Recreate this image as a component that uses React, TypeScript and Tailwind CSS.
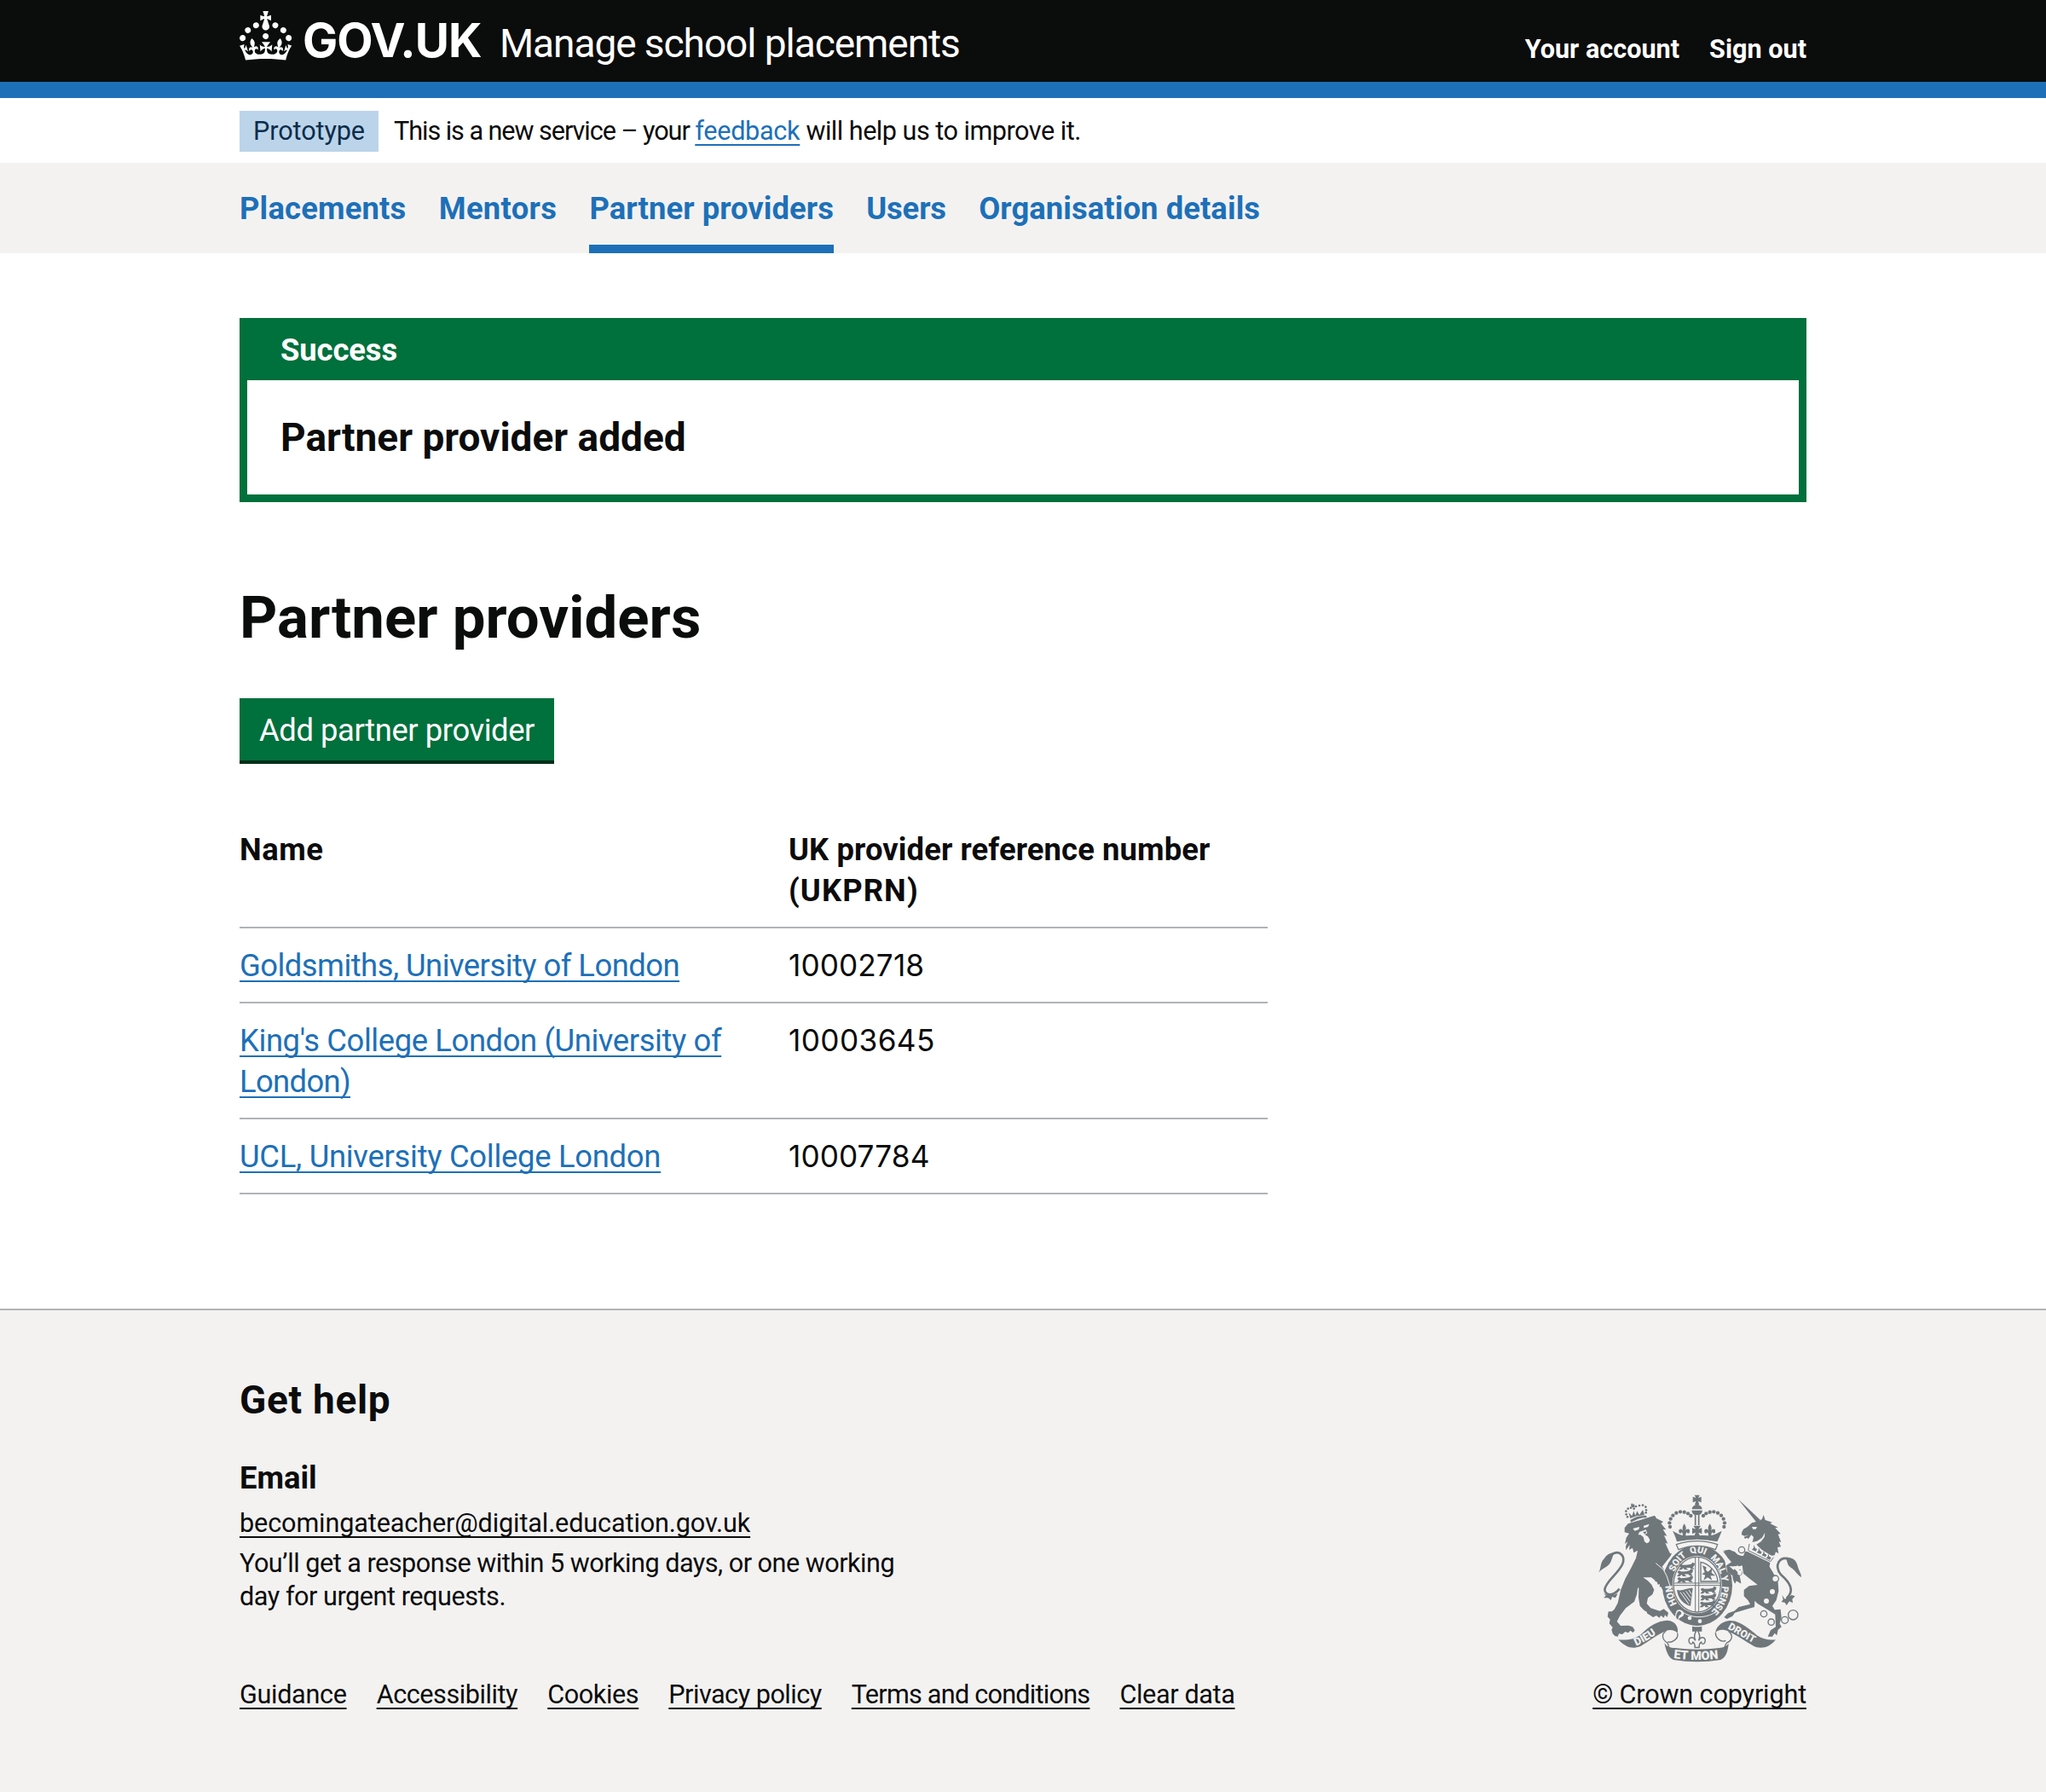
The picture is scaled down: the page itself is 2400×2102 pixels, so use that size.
import type { ReactNode } from "react";

const navItems = [
  { label: "Placements", tracking: "tracking-[0.17px]" },
  { label: "Mentors", tracking: "tracking-[0.3px]" },
  { label: "Partner providers", tracking: "tracking-[0.06px]", current: true },
  { label: "Users", tracking: "tracking-[-0.14px]" },
  { label: "Organisation details", tracking: "tracking-[0.08px]" },
];

const footerLinks = [
  { label: "Guidance", tracking: "tracking-[-0.33px]" },
  { label: "Accessibility", tracking: "tracking-[-0.44px]" },
  { label: "Cookies", tracking: "tracking-[-0.4px]" },
  { label: "Privacy policy", tracking: "tracking-[-0.5px]" },
  { label: "Terms and conditions", tracking: "tracking-[-0.75px]" },
  { label: "Clear data", tracking: "tracking-[-0.37px]" },
];

function Link({ children, className = "" }: { children: ReactNode; className?: string }) {
  return (
    <a
      href="#"
      className={`underline decoration-[2px] underline-offset-[4.5px] [text-decoration-skip-ink:none] ${className}`}
    >
      {children}
    </a>
  );
}

function Container({ children, className = "" }: { children: ReactNode; className?: string }) {
  return <div className={`mx-auto w-[1838px] ${className}`}>{children}</div>;
}

function CrownLogo() {
  return (
    <svg viewBox="0 0 32 30" className="mt-[13px] h-[57.5px] w-[61.3px] shrink-0 fill-white" aria-hidden="true">
      <path d="M22.6 10.4c-1 .4-2-.1-2.4-1-.4-.9.1-2 1-2.4.9-.4 2 .1 2.4 1s-.1 2-1 2.4m-5.9 6.7c-.9.4-2-.1-2.4-1-.4-.9.1-2 1-2.4.9-.4 2 .1 2.4 1s-.1 2-1 2.4m10.8-3.7c-1 .4-2-.1-2.4-1-.4-.9.1-2 1-2.4.9-.4 2 .1 2.4 1s0 2-1 2.4m3.3 4.8c-1 .4-2-.1-2.4-1-.4-.9.1-2 1-2.4.9-.4 2 .1 2.4 1s-.1 2-1 2.4M17 4.7l2.3 1.2V2.5l-2.3.7-.2-.2.9-3h-3.4l.9 3-.2.2c-.1.1-2.3-.7-2.3-.7v3.4L15 4.7c.1.1.1.2.2.2l-1.3 4c-.1.2-.1.4-.1.6 0 1.1.8 2 1.9 2.2h.7c1-.2 1.9-1.1 1.9-2.1 0-.2 0-.4-.1-.6l-1.3-4c-.1-.2 0-.2.1-.3m-7.6 5.7c.9.4 2-.1 2.4-1 .4-.9-.1-2-1-2.4-.9-.4-2 .1-2.4 1s0 2 1 2.4m-5 3c.9.4 2-.1 2.4-1 .4-.9-.1-2-1-2.4-.9-.4-2 .1-2.4 1s.1 2 1 2.4m-3.2 4.8c.9.4 2-.1 2.4-1 .4-.9-.1-2-1-2.4-.9-.4-2 .1-2.4 1s0 2 1 2.4m14.8 11c4.4 0 8.6.3 12.3.8 1.1-4.5 2.4-7 3.7-8.8l-2.5-.9c.2 1.3.3 1.9 0 2.7-.4-.4-.8-1.1-1.1-2.3l-1.2 4c.7-.5 1.3-.8 2-.9-1.1 2.5-2.6 3.1-3.5 3-1.1-.2-1.7-1.2-1.5-2.1.3-1.2 1.5-1.5 2.1-.1 1.1-2.3-.8-3-2-2.3 1.9-1.9 2.1-3.5.6-5.6-2.1 1.6-2.1 3.2-1.2 5.5-1.2-1.4-3.2-.6-2.5 1.6.9-1.4 2.1-.5 1.9.8-.2 1.1-1.7 2.1-3.5 1.9-2.7-.2-2.9-2.1-2.9-3.6.7-.1 1.9.5 2.9 1.9l.4-4.3c-1.1 1.1-2.1 1.4-3.2 1.4.4-1.2 2.1-3 2.1-3h-5.4s1.7 1.9 2.1 3c-1.1 0-2.1-.2-3.2-1.4l.4 4.3c1-1.4 2.2-2 2.9-1.9-.1 1.5-.2 3.4-2.9 3.6-1.9.2-3.4-.8-3.5-1.9-.2-1.3 1-2.2 1.9-.8.7-2.3-1.2-3-2.5-1.6.9-2.2.9-3.9-1.2-5.5-1.5 2-1.3 3.7.6 5.6-1.2-.7-3.1 0-2 2.3.6-1.4 1.8-1.1 2.1.1.2.9-.3 1.9-1.5 2.1-.9.2-2.4-.5-3.5-3 .6 0 1.2.3 2 .9l-1.2-4c-.3 1.1-.7 1.9-1.1 2.3-.3-.8-.2-1.4 0-2.7l-2.9.9C1.3 23 2.6 25.5 3.7 30c3.7-.5 7.9-.8 12.3-.8" />
    </svg>
  );
}

const archDots = [
  [-95, 152], [-97, 138], [-93, 124], [-85, 112], [-73, 103], [-59, 99], [-45, 100], [-32, 105], [-22, 113],
];

function FleurDeLis({ x, y, s = 1 }: { x: number; y: number; s?: number }) {
  return (
    <path
      transform={`translate(${x} ${y}) scale(${s})`}
      d="M0-17C6-9 6-2 3 4C8-6 18-2 15 7C13 12 8 11 8 7C5 8 4 11 4 17H-4C-4 11-5 8-8 7C-8 11-13 12-15 7C-18-2-8-6-3 4C-6-2-6-9 0-17Z"
    />
  );
}

function MiniLion({ x, y }: { x: number; y: number }) {
  return (
    <path
      transform={`translate(${x} ${y}) scale(1.3 1.15)`}
      d="M2 4L6 1L12 4L24 3L34 1L38-4L44-1L42 7L38 10L43 16H34L31 12L20 12L26 18H16L13 13L8 18H0L6 10L2 8Z"
    />
  );
}

function RoyalArms() {
  return (
    <svg viewBox="70 38 722 592" className="h-[197.3px] w-[240.7px] fill-[#6f777b]" aria-hidden="true">
      {/* lion */}
      <g transform="translate(60 30)">
        <path d="M108 125L120 111L165 97L214 82L220 92L244 104L236 110L254 132L243 131L257 154L247 152L260 181L251 178L262 203L268 216L274 214L270 224L240 262L252 280L273 335L270 346L262 338L262 348L252 345L244 346L243 334L230 332L235 322L225 325L222 315L214 314L220 306L214 300L222 292L200 300L173 300L190 312L203 325L212 344L206 360L190 372L186 392L200 408L232 418L246 411L262 424L258 440L250 432L246 442L236 434L230 442L220 434L208 440L196 432L188 427L186 421L176 415L162 400L157 372L158 336L154 338L151 360L142 385L112 408L92 434L81 455L94 470L122 469L136 474L144 486L138 494L128 487L121 495L110 491L100 500L88 498L84 508L74 506L66 498L62 484L66 476L54 462L57 448L48 438L51 420L63 420L72 412L84 390L94 345L110 305L130 268L148 232L154 205L140 213L136 196L124 203L126 185L113 204L112 190L119 174L109 182L114 160L124 145L108 141Z" />
        <path d="M137 128L160 122L158 131L144 136ZM175 118L195 112L190 122L176 126ZM160 140L183 132L188 143L180 150L190 156L197 168L194 176L186 180L178 174L174 158L164 150L156 150Z" className="fill-[#f3f2f1]" />
        <path d="M172 140L186 138L180 148Z" />
        <path d="M12 286C28 276 18 252 36 234C46 218 58 212 72 214C62 228 64 250 44 262C32 268 22 276 12 286Z" />
        <path d="M64 218C92 202 112 226 100 254C84 288 42 314 38 342C38 362 66 370 90 340" className="fill-none stroke-[#6f777b] stroke-[8]" />
        <path d="M28 348C40 366 62 366 84 356L76 372L64 368L60 380L50 372L34 372L42 364Z" />
        <path d="M128 98C160 80 158 86 184 82L186 89C160 90 156 94 130 106Z" />
        <path d="M128 92L122 72L134 84L140 66L146 82L152 66L160 80L172 62L178 80L184 80L150 84Z" />
        {[[114, 78], [113, 67], [120, 58], [130, 55], [148, 50], [160, 47], [172, 46], [182, 52], [184, 63], [183, 72], [118, 87], [141, 58]].map(([x, y], i) => (
          <circle key={i} cx={x} cy={y} r="4" />
        ))}
        <path d="M133 38L139 44L142 40L144 52L134 54L130 46Z" />
      </g>

      {/* unicorn */}
      <g transform="translate(420 30)">
        <path d="M147 24L226 98L213 107Z" />
        <path d="M160 142L166 130L180 122L196 108L220 102L232 94L237 80L243 98L268 106L260 110L288 124L278 126L297 146L288 148L299 176L291 174L298 192L286 194L290 216L280 210L276 222L262 224L232 204L212 184L228 174L240 158L242 142L232 160L214 172L198 176L202 158L194 150L188 158L184 164L178 160L172 164L168 158L186 150L170 154L160 150Z" />
        <path d="M196 122L214 122L210 130L200 130Z" className="fill-[#f3f2f1]" />
        <path d="M188 178L270 226L272 232L262 248L182 208Z" className="fill-[#f3f2f1]" />
        <path d="M187 182L183 205L262 244L272 229" className="fill-none stroke-[#6f777b] stroke-[3]" />
        {[[204, 196], [221, 206], [238, 216], [254, 226]].map(([x, y]) => (
          <path key={x} d={`M${x - 8} ${y + 6}L${x - 2} ${y}L${x - 1} ${y - 10}L${x + 4} ${y + 1}L${x + 10} ${y + 4}L${x + 6} ${y + 12}Z`} />
        ))}
        <path d="M180 209L260 248L258 262L270 282L288 318L290 348L282 380L268 400L276 414L297 412L300 440L294 462L300 474L288 484L284 504L276 496L268 508L252 508L262 486L280 474L278 430L252 414L216 392L206 382L205 404L176 412L136 424L128 436L108 446L98 440L112 426L134 418L150 404L190 394L182 380L168 366L168 344L186 330L216 326L188 304L166 286L162 258L140 264L116 262L128 278L146 290L158 322L142 312L136 322L126 300L116 290L104 284L108 256L132 244L156 240L140 244L126 230L114 212L104 222L98 218L94 206L116 202L136 210L150 224L166 224L172 208Z" />
        <path d="M316 234C340 226 352 240 358 262C362 278 370 286 370 299C356 292 350 276 334 266C320 258 322 246 316 234Z" />
        <path d="M332 236C290 222 274 260 298 290C330 318 348 346 318 374" className="fill-none stroke-[#6f777b] stroke-[8]" />
        <path d="M302 362L312 376L336 362L348 366L338 376L340 390L328 384L318 398L312 388L300 386L306 378Z" />
        {[[160, 203, 11], [150, 283, 10], [278, 305, 12], [238, 428, 11], [264, 457, 11], [312, 450, 12], [341, 432, 17]].map(([x, y, r]) => (
          <circle key={y} cx={x} cy={y} r={r} className="fill-none stroke-[#6f777b] stroke-[4]" />
        ))}
        <g className="fill-[#f3f2f1]">
          <circle cx="278" cy="305" r="9" />
          <circle cx="268" cy="350" r="9" />
          <circle cx="247" cy="383" r="9" />
          <circle cx="150" cy="283" r="7" />
          <circle cx="142" cy="228" r="5" />
        </g>
      </g>

      {/* garter and shield */}
      <ellipse cx="424" cy="358" rx="127" ry="146" className="fill-[#f3f2f1]" />
      <ellipse cx="424" cy="358" rx="123" ry="142" />
      <path d="M284 282L312 312L334 376L308 384L290 352L262 330L262 292Z" />
      <path d="M278 280L304 302L316 324L333 376" className="fill-none stroke-[#f3f2f1] stroke-[3]" />
      <path d="M514 236L552 248L536 254L556 268L570 292L578 350L558 330L528 310Z" className="fill-[#f3f2f1]" />
      <path d="M516 240L540 234L560 248L586 256L594 280L560 290L548 292L572 318L578 350L562 342L552 326L530 312L526 288L544 276L532 262Z" />
      <path d="M536 290L560 292L552 304ZM566 304L582 304L578 322L566 320Z" className="fill-[#f3f2f1]" />
      <ellipse cx="423" cy="355" rx="87" ry="101" className="fill-[#f3f2f1]" />
      <ellipse cx="423" cy="355" rx="83" ry="97" className="fill-none stroke-[#6f777b] stroke-[4]" />
      <path d="M417 259V451M429 259V451M341 350H505M341 358H505" className="fill-none stroke-[#6f777b] stroke-[3]" />
      <MiniLion x={358} y={282} />
      <MiniLion x={352} y={305} />
      <MiniLion x={352} y={328} />
      <MiniLion x={434} y={366} />
      <MiniLion x={434} y={390} />
      <MiniLion x={432} y={414} />
      <path d="M436 276V344H496C494 312 466 282 436 276Z" className="fill-none stroke-[#6f777b] stroke-[4]" />
      <path d="M442 288L456 294L454 304L462 310L476 296L474 314L488 324L470 324L476 340L460 330L446 340L452 322L440 318L450 312Z" />
      <path d="M352 374C372 380 392 364 408 368L400 430C376 426 356 404 352 374Z" />
      <path d="M364 382L394 424M374 382L398 414M384 378L401 402M394 374L403 388" className="fill-none stroke-[#f3f2f1] stroke-[3]" />
      <path id="garter" d="M423 473A97 116 0 0 1 423 242A97 116 0 0 1 423 473" className="fill-none" />
      <g className="fill-[#f3f2f1] stroke-[#f3f2f1] stroke-[0.8] font-['Roboto'] text-[32px] font-bold">
        <text><textPath href="#garter" startOffset="90">HON</textPath></text>
        <text><textPath href="#garter" startOffset="206">SOIT</textPath></text>
        <text><textPath href="#garter" startOffset="294">QUI</textPath></text>
        <text><textPath href="#garter" startOffset="368">MAL Y</textPath></text>
        <text><textPath href="#garter" startOffset="478">PENSE</textPath></text>
      </g>
      <path d="M352 446C366 438 380 452 376 462C372 472 362 468 354 482C342 476 346 456 352 446Z" className="fill-[#f3f2f1]" />
      <path d="M356 450C366 446 372 456 364 462C356 464 360 474 354 478C346 470 350 458 356 450Z" />
      <path d="M372 452C400 472 446 476 482 456" className="fill-none stroke-[#f3f2f1] stroke-[3]" />
      <circle cx="397" cy="473" r="7" className="fill-[#f3f2f1]" />
      <circle cx="433" cy="484" r="7" className="fill-[#f3f2f1]" />

      {/* royal crown */}
      <path d="M337 166C356 176 366 182 378 182C396 184 408 180 423 184C438 180 452 184 468 182C480 182 490 176 510 166C504 182 500 192 494 204Q423 188 352 204C348 190 344 180 337 166Z" />
      <path d="M350 214Q423 190 495 214L488 232Q423 206 358 232Z" className="fill-[#f3f2f1] stroke-[#6f777b] stroke-[4]" />
      <FleurDeLis x={378} y={162} s={1.25} />
      <FleurDeLis x={468} y={162} s={1.25} />
      <path d="M410 148H436L428 160L440 156V176L428 172L434 186H412L418 172L406 176V156L418 160Z" />
      <path d="M417 110V146M429 110V146" className="fill-none stroke-[#6f777b] stroke-[5]" />
      <path d="M404 94H442C440 108 432 110 423 110C414 110 406 108 404 94ZM405 90C406 78 416 74 423 74C430 74 440 78 441 90Z" />
      <path d="M414 40H432L427 50L438 46V66L427 62L431 74H415L419 62L408 66V46L419 50Z" />
      {archDots.map(([dx, y]) => (
        <g key={y + dx}>
          <circle cx={423 + dx} cy={y} r="6.5" />
          <circle cx={423 - dx} cy={y} r="6.5" />
        </g>
      ))}

      {/* motto ribbons */}
      <path d="M146 549C176 552 204 548 226 530C256 500 286 482 318 481C348 482 360 508 354 526C346 516 330 512 314 518C284 530 252 556 224 572C194 584 172 576 146 549Z" />
      <path d="M354 526C360 548 330 562 320 556M314 518C296 530 300 548 318 560C326 566 320 584 332 584" className="fill-none stroke-[#6f777b] stroke-[4]" />
      <path d="M700 549C678 552 656 548 634 534C604 508 568 480 536 482C506 486 488 508 488 524C500 512 516 512 534 520C566 534 602 562 630 575C656 582 680 574 700 549Z" />
      <path d="M488 524C488 546 510 560 524 552M534 520C552 534 546 552 528 560C518 568 524 580 514 586" className="fill-none stroke-[#6f777b] stroke-[4]" />
      <path d="M308 560C316 574 330 578 344 578Q423 588 502 578C516 576 526 572 534 562C532 590 524 612 506 620Q423 634 340 620C322 612 314 590 308 560Z" />
      <path d="M406 502Q423 506 440 502V520H406Z" />
      <path
        transform="translate(423 545) scale(1.85)"
        d="M0-17C6-9 6-2 3 4C8-6 18-2 15 7C13 12 8 11 8 7C5 8 4 11 4 17H-4C-4 11-5 8-8 7C-8 11-13 12-15 7C-18-2-8-6-3 4C-6-2-6-9 0-17Z"
        className="fill-[#f3f2f1] stroke-[#6f777b] stroke-[2.4]"
      />
      <path id="dieu" d="M206 572Q258 550 310 506" className="fill-none" />
      <path id="droit" d="M530 510Q590 544 650 578" className="fill-none" />
      <path id="etmon" d="M338 614Q423 626 512 614" className="fill-none" />
      <g className="fill-[#f3f2f1] font-['Roboto'] font-black">
        <text className="text-[38px]"><textPath href="#dieu" startOffset="3">DIEU</textPath></text>
        <text className="text-[36px]"><textPath href="#droit">DROIT</textPath></text>
        <text className="text-[43px]"><textPath href="#etmon" startOffset="2">ET MON</textPath></text>
      </g>
    </svg>
  );
}

const cell = "pt-[20px] pb-[18px] align-top";
const headerCell = "pt-[20px] pb-[18px] text-left align-top font-bold";
const numberCell = "pt-[19px] pb-[19px] align-top font-['Inter'] text-[35.2px]";

export default function App() {
  return (
    <div className="flex min-h-[2102px] flex-col bg-white font-['Roboto',sans-serif] text-[36.4px] leading-[48px] text-[#0b0c0c]">
      <header className="h-[115px] border-b-[19px] border-[#1d70b8] bg-[#0b0c0c] text-white">
        <Container className="flex items-start">
          <CrownLogo />
          <span className="mt-[19px] ml-[12.7px] w-[214px] font-['Inter'] text-[55px] leading-[56px] font-bold tracking-[-0.95px]">
            GOV.UK
          </span>
          <span className="mt-[28px] ml-[17px] text-[46px] leading-[46px] tracking-[-1.05px] whitespace-nowrap">
            Manage school placements
          </span>
          <nav className="mt-[43px] ml-auto flex gap-[35px] text-[30.6px] leading-[30px] font-bold">
            <a href="#">Your account</a>
            <a href="#">Sign out</a>
          </nav>
        </Container>
      </header>

      <Container className="flex h-[76px] items-start pt-[15px] text-[30.6px] leading-[48px]">
        <strong className="h-[48px] w-[163px] bg-[#bbd4ea] text-center font-normal tracking-[-0.1px] text-[#0c2d4a]">
          Prototype
        </strong>
        <p className="ml-[18px] whitespace-pre">
          <span className="tracking-[-1.045px]">This is a new service – your </span>
          <Link className="tracking-[-0.29px] text-[#1d70b8]">feedback</Link>
          <span className="tracking-[-0.5px]"> will help us to improve it.</span>
        </p>
      </Container>

      <div className="bg-[#f3f2f1]">
        <Container className="flex h-[106px] gap-[38.3px] font-bold text-[#1d70b8]">
          {navItems.map((item) => (
            <a
              key={item.label}
              href="#"
              className={`pt-[30px] ${item.tracking} ${item.current ? "border-b-[10px] border-[#1d70b8]" : ""}`}
            >
              {item.label}
            </a>
          ))}
        </Container>
      </div>

      <Container>
        <main className="flex flex-col items-start">
          <section className="mt-[76px] h-[216px] w-full border-[9px] border-[#00703c]">
            <h2 className="h-[64px] bg-[#00703c] pt-[5px] pl-[39px] font-bold tracking-[-0.1px] text-white">Success</h2>
            <p className="pt-[43px] pl-[39px] text-[46px] font-bold">Partner provider added</p>
          </section>

          <h1 className="mt-[98px] text-[68.9px] leading-[76px] font-bold tracking-[0.06px]">Partner providers</h1>

          <button
            type="button"
            className="mt-[56px] h-[77px] w-[369px] border-b-4 border-[#002d18] bg-[#00703c] pt-[3px] tracking-[-0.42px] text-white"
          >
            Add partner provider
          </button>

          <table className="mt-[57px] w-[1206px] table-fixed border-separate border-spacing-0 [&_td]:border-b-2 [&_td]:border-[#b1b4b6] [&_th]:border-b-2 [&_th]:border-[#b1b4b6]">
            <thead>
              <tr>
                <th className={`w-[644px] tracking-[0.5px] ${headerCell}`}>Name</th>
                <th className={headerCell}>
                  <span className="tracking-[0.1px]">UK provider reference number</span>
                  <br />
                  <span className="tracking-[1.1px]">(UKPRN)</span>
                </th>
              </tr>
            </thead>
            <tbody>
              <tr>
                <td className={cell}>
                  <Link className="tracking-[-0.53px] text-[#1d70b8]">Goldsmiths, University of London</Link>
                </td>
                <td className={`tracking-[0.1px] ${numberCell}`}>10002718</td>
              </tr>
              <tr>
                <td className={cell}>
                  <Link className="text-[#1d70b8]">
                    <span className="tracking-[-0.39px]">King's College London (University of</span>
                    <br />
                    <span className="tracking-[-0.64px]">London)</span>
                  </Link>
                </td>
                <td className={`tracking-[0.4px] ${numberCell}`}>10003645</td>
              </tr>
              <tr>
                <td className={cell}>
                  <Link className="tracking-[-0.28px] text-[#1d70b8]">UCL, University College London</Link>
                </td>
                <td className={`tracking-[0.1px] ${numberCell}`}>10007784</td>
              </tr>
            </tbody>
          </table>
        </main>
      </Container>

      <footer className="mt-[134px] flex-1 border-t-2 border-[#b1b4b6] bg-[#f3f2f1]">
        <Container className="flex items-end justify-between pt-[81px] text-[30.6px] leading-[38.4px]">
          <div>
            <h2 className="text-[46px] leading-[48px] font-bold tracking-[0.7px]">Get help</h2>
            <h3 className="mt-[44px] text-[36.4px] leading-[48px] font-bold">Email</h3>
            <p className="mt-[10px]">
              <Link className="tracking-[-0.12px]">becomingateacher@digital.education.gov.uk</Link>
            </p>
            <p className="mt-[9px]">
              <span className="tracking-[-0.5px]">You’ll get a response within 5 working days, or one working</span>
              <br />
              <span className="tracking-[-0.46px]">day for urgent requests.</span>
            </p>
            <ul className="mt-[77px] flex gap-[35.1px]">
              {footerLinks.map((link) => (
                <li key={link.label}>
                  <Link className={link.tracking}>{link.label}</Link>
                </li>
              ))}
            </ul>
          </div>
          <div className="flex flex-col items-center">
            <RoyalArms />
            <Link className="mt-[19px] tracking-[-0.15px]">© Crown copyright</Link>
          </div>
        </Container>
      </footer>
    </div>
  );
}
